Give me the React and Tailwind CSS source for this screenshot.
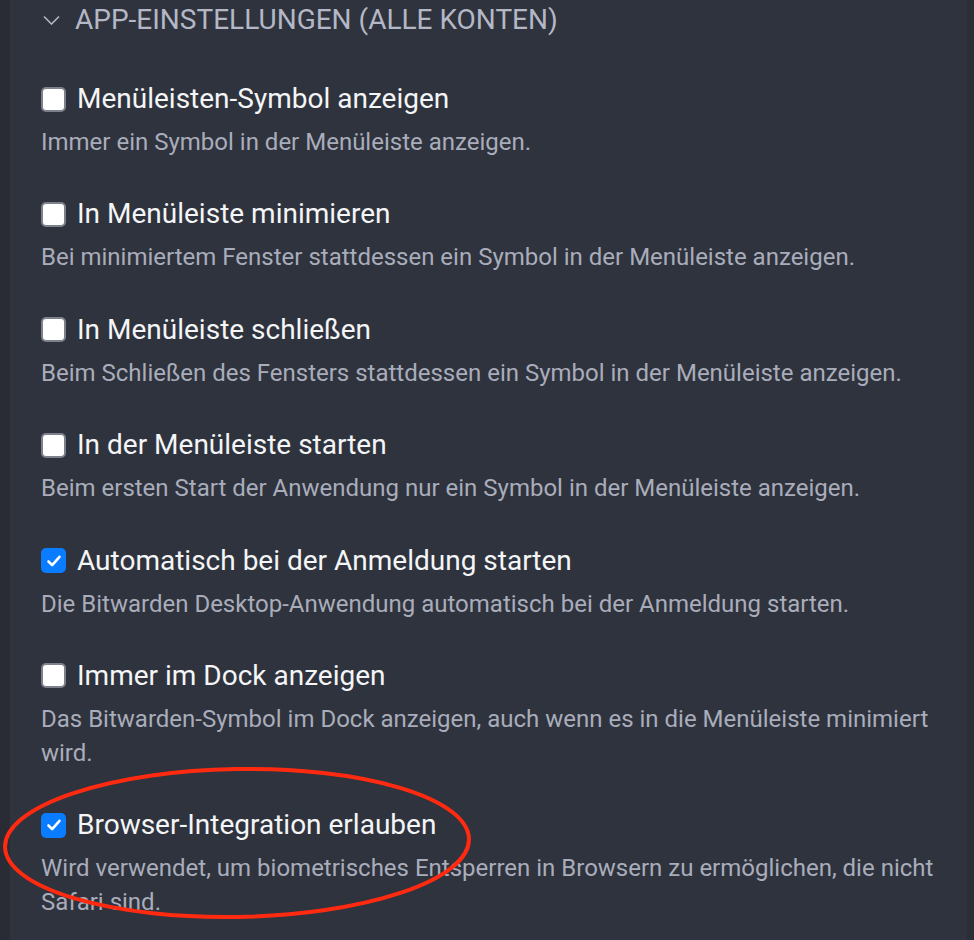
import React from "react";

const items = [
    {
        label: "Menüleisten-Symbol anzeigen",
        desc: "Immer ein Symbol in der Menüleiste anzeigen.",
        checked: false,
    },
    {
        label: "In Menüleiste minimieren",
        desc: "Bei minimiertem Fenster stattdessen ein Symbol in der Menüleiste anzeigen.",
        checked: false,
    },
    {
        label: "In Menüleiste schließen",
        desc: "Beim Schließen des Fensters stattdessen ein Symbol in der Menüleiste anzeigen.",
        checked: false,
    },
    {
        label: "In der Menüleiste starten",
        desc: "Beim ersten Start der Anwendung nur ein Symbol in der Menüleiste anzeigen.",
        checked: false,
    },
    {
        label: "Automatisch bei der Anmeldung starten",
        desc: "Die Bitwarden Desktop-Anwendung automatisch bei der Anmeldung starten.",
        checked: true,
    },
    {
        label: "Immer im Dock anzeigen",
        desc: "Das Bitwarden-Symbol im Dock anzeigen, auch wenn es in die Menüleiste minimiert wird.",
        checked: false,
    },
    {
        label: "Browser-Integration erlauben",
        desc: "Wird verwendet, um biometrisches Entsperren in Browsern zu ermöglichen, die nicht Safari sind.",
        checked: true,
    },
];

function Checkbox({ checked }) {
    if (checked) {
        return (
            <span className="flex h-[25px] w-[25px] shrink-0 items-center justify-center rounded-[5px] bg-[#0a7cff]">
                <svg width="16" height="16" viewBox="0 0 16 16" fill="none">
                    <path
                        d="M2.5 8.5 L6.2 12.2 L13.5 3.8"
                        stroke="white"
                        strokeWidth="2.6"
                        strokeLinecap="round"
                        strokeLinejoin="round"
                    />
                </svg>
            </span>
        );
    }
    return (
        <span className="block h-[25px] w-[25px] shrink-0 rounded-[5px] border-2 border-[#7d818b] bg-white" />
    );
}

export default function App() {
    return (
        <div
            className="relative flex h-[940px] w-[974px] overflow-hidden bg-[#2f333d]"
            style={{ fontFamily: "Roboto, 'Liberation Sans', sans-serif" }}
        >
            {/* left strip */}
            <div className="h-full w-[10px] shrink-0 border-r border-[#2a2d35] bg-[#292c34]" />

            <div className="flex-1 pl-[31px] pr-[14px]">
                {/* section header */}
                <div className="flex h-[40px] items-center gap-[15px] pl-[2px]">
                    <svg width="17" height="10" viewBox="0 0 17 10" fill="none">
                        <path d="M1 1.5 L8.5 9 L16 1.5" stroke="#b3b7c5" strokeWidth="1.6" />
                    </svg>
                    <span className="text-[28px] uppercase leading-none text-[#b4b8c6]">
                        App-Einstellungen (alle Konten)
                    </span>
                </div>

                <div className="mt-[43px] flex flex-col gap-[39.4px]">
                    {items.map((item) => (
                        <div key={item.label}>
                            <div className="flex h-[32px] items-center gap-[11px]">
                                <Checkbox checked={item.checked} />
                                <span className="text-[28px] leading-none text-[#f4f5f7]">
                                    {item.label}
                                </span>
                            </div>
                            <p className="mt-[10px] text-[24px] leading-[34px] text-[#a9adbb]">
                                {item.desc}
                            </p>
                        </div>
                    ))}
                </div>
            </div>

            {/* right strip */}
            <div className="h-full w-[7px] shrink-0 bg-[#2b2e37]" />

            {/* red annotation */}
            <svg
                className="pointer-events-none absolute left-0 top-0"
                width="974"
                height="940"
            >
                <ellipse
                    cx="237"
                    cy="843"
                    rx="232"
                    ry="74"
                    transform="rotate(-1 237 843)"
                    fill="none"
                    stroke="#ff2a10"
                    strokeWidth="4"
                />
            </svg>
        </div>
    );
}
